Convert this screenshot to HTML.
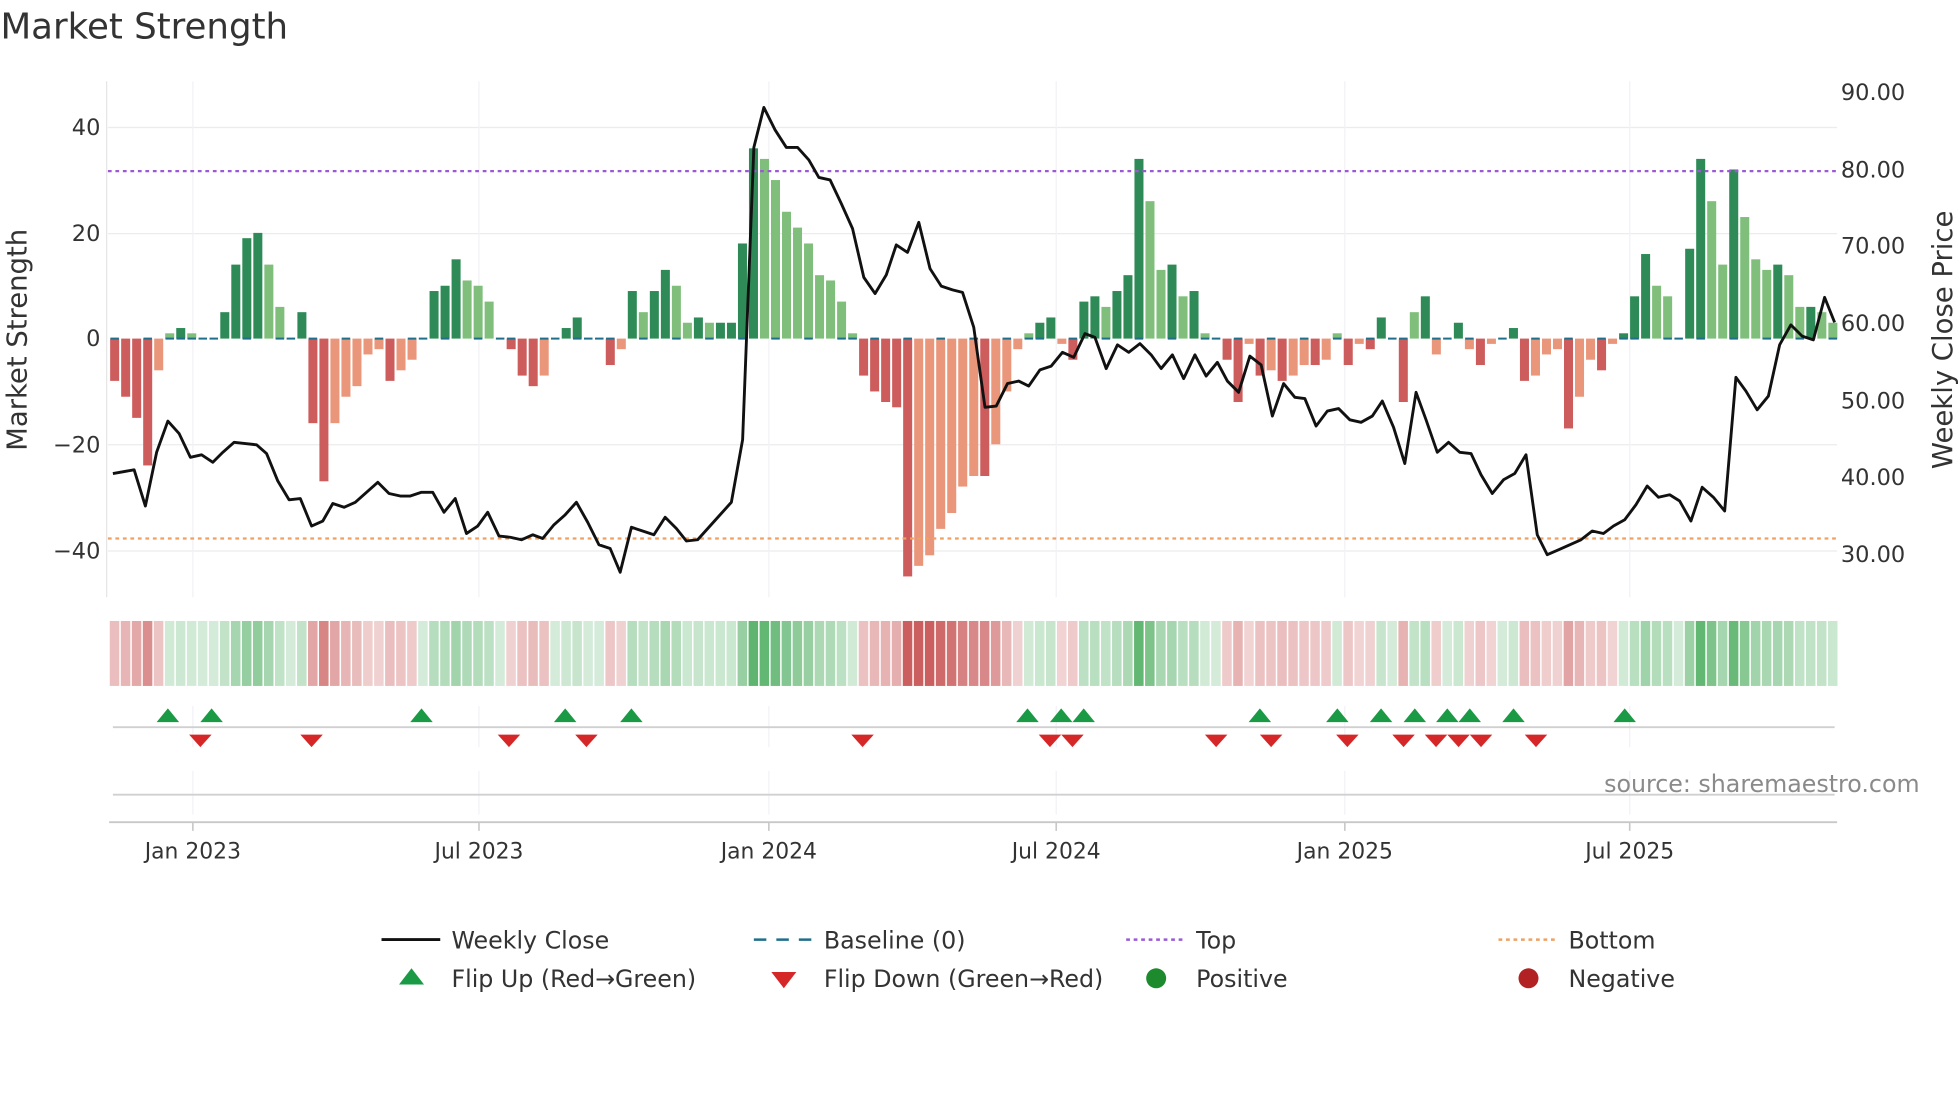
<!DOCTYPE html>
<html><head><meta charset="utf-8"><style>
html,body{margin:0;padding:0;background:#fff;}
svg{display:block;font-family:"DejaVu Sans","Liberation Sans",sans-serif;}
</style></head><body>
<svg id="s" width="1960" height="1102" viewBox="0 0 1568 882" xmlns="http://www.w3.org/2000/svg">
<rect width="1568" height="882" fill="#fff"/>
<text x="0" y="31" font-size="28.5" fill="#333">Market Strength</text>
<g stroke="#ececec" stroke-width="1">
<line x1="86" x2="1470" y1="102" y2="102"/><line x1="86" x2="1470" y1="187" y2="187"/>
<line x1="86" x2="1470" y1="356" y2="356"/><line x1="86" x2="1470" y1="441" y2="441"/>
</g>
<g stroke="#f2f2f6" stroke-width="1" id="vg"></g>
<line x1="85" x2="85" y1="65" y2="478" stroke="#e6e6e6"/>
<g font-size="18" fill="#333" text-anchor="end">
<text x="80" y="108">40</text><text x="80" y="193">20</text><text x="80" y="277">0</text>
<text x="80" y="362">−20</text><text x="80" y="447">−40</text>
</g>
<g font-size="18" fill="#333">
<text x="1473" y="80">90.00</text><text x="1473" y="142">80.00</text><text x="1473" y="203">70.00</text>
<text x="1473" y="265">60.00</text><text x="1473" y="327">50.00</text><text x="1473" y="388">40.00</text><text x="1473" y="450">30.00</text>
</g>
<text transform="translate(21,272) rotate(-90)" font-size="22" fill="#333" text-anchor="middle">Market Strength</text>
<text transform="translate(1562,272) rotate(-90)" font-size="22" fill="#333" text-anchor="middle">Weekly Close Price</text>
<g id="bars"></g>
<g id="base"></g>
<line x1="86" x2="1470" y1="137" y2="137" stroke="#9b59d6" stroke-width="1.8" stroke-dasharray="3,3"/>
<line x1="86" x2="1470" y1="431" y2="431" stroke="#f0a060" stroke-width="1.8" stroke-dasharray="3,3"/>
<polyline id="price" fill="none" stroke="#111" stroke-width="2.3" stroke-linejoin="round"/>
<g id="heat"></g>
<line x1="90" x2="1468" y1="582" y2="582" stroke="#d0d0d0" stroke-width="1.5"/>
<line x1="90" x2="1468" y1="636" y2="636" stroke="#d0d0d0" stroke-width="1.5"/>
<line x1="87" x2="1470" y1="658" y2="658" stroke="#c8c8c8" stroke-width="1.5"/>
<g id="tri"></g>
<g id="ticks" stroke="#c8c8c8" stroke-width="1.3"></g>
<g font-size="17.5" fill="#333" text-anchor="middle">
<text x="154" y="687">Jan 2023</text><text x="383" y="687">Jul 2023</text><text x="615" y="687">Jan 2024</text>
<text x="845" y="687">Jul 2024</text><text x="1076" y="687">Jan 2025</text><text x="1304" y="687">Jul 2025</text>
</g>
<text x="1536" y="634" font-size="19" fill="#8a8a8a" text-anchor="end">source: sharemaestro.com</text>
<g font-size="19" fill="#333">
<line x1="305" x2="352" y1="752" y2="752" stroke="#111" stroke-width="2.3"/><text x="361" y="759">Weekly Close</text>
<line x1="603" x2="650" y1="752" y2="752" stroke="#1f6f8b" stroke-width="2" stroke-dasharray="10,8"/><text x="659" y="759">Baseline (0)</text>
<line x1="901" x2="948" y1="752" y2="752" stroke="#9b59d6" stroke-width="2" stroke-dasharray="3,3"/><text x="957" y="759">Top</text>
<line x1="1199" x2="1246" y1="752" y2="752" stroke="#f0a060" stroke-width="2" stroke-dasharray="3,3"/><text x="1255" y="759">Bottom</text>
<polygon points="319,788 329,775 339,788" fill="#1a9a45"/><text x="361" y="790">Flip Up (Red→Green)</text>
<polygon points="617,778 627,791 637,778" fill="#d62728"/><text x="659" y="790">Flip Down (Green→Red)</text>
<circle cx="925" cy="783" r="8" fill="#1e8a2e"/><text x="957" y="790">Positive</text>
<circle cx="1223" cy="783" r="8" fill="#b22222"/><text x="1255" y="790">Negative</text>
</g>
</svg>
<script>
var NS="http://www.w3.org/2000/svg";
function el(t,a,p){var e=document.createElementNS(NS,t);for(var k in a)e.setAttribute(k,a[k]);document.getElementById(p).appendChild(e);return e;}
var v=[-8,-11,-15,-24,-6,1,2,1,0,0,5,14,19,20,14,6,0,5,-16,-27,-16,-11,-9,-3,-2,-8,-6,-4,0,9,10,15,11,10,7,0,-2,-7,-9,-7,0,2,4,0,0,-5,-2,9,5,9,13,10,3,4,3,3,3,18,36,34,30,24,21,18,12,11,7,1,-7,-10,-12,-13,-45,-43,-41,-36,-33,-28,-26,-26,-20,-10,-2,1,3,4,-1,-4,7,8,6,9,12,34,26,13,14,8,9,1,0,-4,-12,-1,-7,-6,-8,-7,-5,-5,-4,1,-5,-1,-2,4,0,-12,5,8,-3,0,3,-2,-5,-1,0,2,-8,-7,-3,-2,-17,-11,-4,-6,-1,1,8,16,10,8,0,17,34,26,14,32,23,15,13,14,12,6,6,5,3];
var n=v.length,x0=87,w=(1471-87)/n;
for(var i=0;i<n;i++){var x=x0+i*w,val=v[i],prev=i?v[i-1]:0;
 var grow=Math.abs(val)>=Math.abs(prev);var c;
 if(val>=0)c=grow?"#2e8b57":"#7fbf7b";else c=grow?"#cd5c5c":"#e9967a";
 var h=Math.abs(val)*4.23,y=val>=0?271-h:271;
 if(h>0.5)el("rect",{x:x+0.8,y:y,width:w-1.6,height:h,fill:c},"bars");
 if(val>=0&&val<2||i%3==0)el("line",{x1:x+1,x2:x+w-1,y1:271,y2:271,stroke:"#1f6f8b","stroke-width":1.6},"base");
 var hc=val>=0?"rgba(60,165,80,"+(0.22+0.6*Math.min(1,val/35))+")":"rgba(195,70,70,"+(0.22+0.65*Math.min(1,-val/40))+")";
 el("rect",{x:x+0.5,y:497,width:w-1.2,height:52,fill:hc},"heat");}
var p=[[90,379],[107,376],[116,405],[125,362],[134,337],[143,347],[152,366],[161,364],[170,370],[178,362],[187,354],[196,355],[205,356],[213,363],[222,385],[231,400],[240,399],[249,421],[258,417],[266,403],[275,406],[284,402],[293,394],[302,386],[311,395],[320,397],[328,397],[337,394],[346,394],[355,410],[364,399],[373,427],[382,421],[390,410],[399,429],[408,430],[417,432],[426,428],[434,431],[443,420],[452,412],[461,402],[470,418],[479,436],[488,439],[496,458],[505,422],[514,425],[523,428],[532,414],[541,423],[549,433],[558,432],[567,422],[576,412],[585,402],[594,352],[603,118],[611,86],[620,104],[629,118],[638,118],[647,128],[655,142],[664,144],[673,163],[682,183],[691,222],[700,235],[709,220],[717,196],[726,202],[735,178],[744,215],[753,229],[762,232],[770,234],[779,262],[788,326],[797,325],[806,307],[815,305],[823,309],[832,296],[841,293],[850,282],[859,286],[868,267],[876,270],[885,295],[894,276],[903,282],[912,275],[921,284],[929,295],[938,284],[947,303],[956,284],[965,301],[974,290],[982,305],[991,314],[1000,285],[1009,292],[1018,333],[1027,307],[1036,318],[1044,319],[1053,341],[1062,329],[1071,327],[1080,336],[1089,338],[1098,333],[1106,321],[1115,342],[1124,371],[1133,314],[1141,336],[1150,362],[1159,354],[1168,362],[1177,363],[1185,380],[1194,395],[1203,384],[1212,379],[1221,364],[1230,428],[1238,444],[1247,440],[1256,436],[1265,432],[1274,425],[1283,427],[1291,421],[1300,416],[1309,404],[1318,389],[1327,398],[1336,396],[1344,401],[1353,417],[1362,390],[1371,398],[1380,409],[1389,302],[1397,313],[1406,328],[1415,317],[1424,276],[1433,260],[1442,269],[1451,272],[1460,238],[1468,258]];
document.getElementById("price").setAttribute("points",p.map(function(q){return q.join(",")}).join(" "));
[154,383,615,845,1076,1304].forEach(function(x){
 el("line",{x1:x,x2:x,y1:65,y2:478},"vg");el("line",{x1:x,x2:x,y1:565,y2:598},"vg");el("line",{x1:x,x2:x,y1:617,y2:652},"vg");
 el("line",{x1:x,x2:x,y1:658,y2:665},"ticks");});
[134,169,337,452,505,822,849,867,1008,1070,1105,1132,1158,1176,1211,1300].forEach(function(x){el("polygon",{points:(x-9)+",578 "+x+",567 "+(x+9)+",578",fill:"#1a9a45"},"tri");});
[160,249,407,469,690,840,858,973,1017,1078,1123,1149,1167,1185,1229].forEach(function(x){el("polygon",{points:(x-9)+",588 "+x+",598 "+(x+9)+",588",fill:"#d62728"},"tri");});
</script>
</body></html>
